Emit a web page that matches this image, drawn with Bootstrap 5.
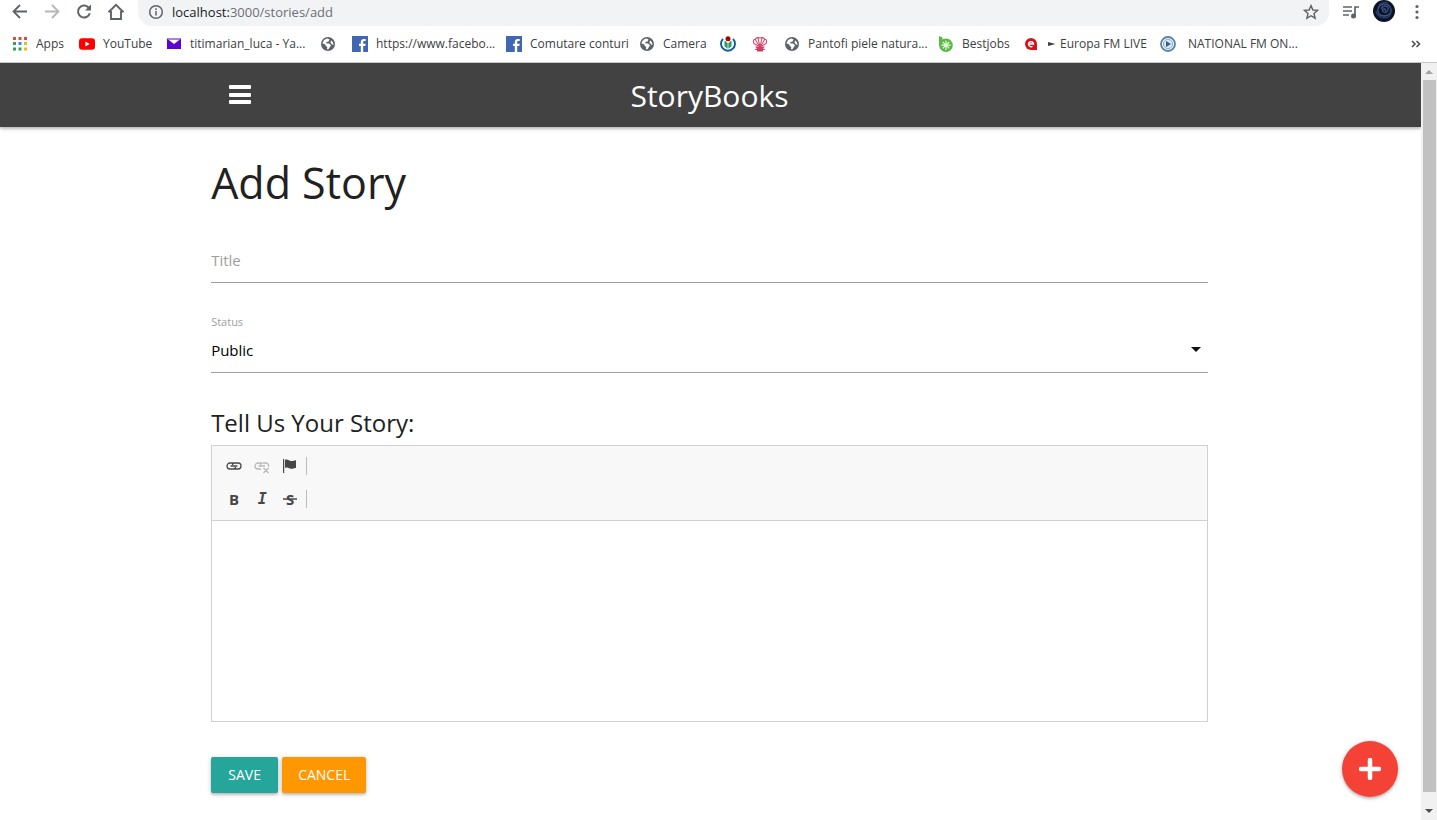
<!DOCTYPE html>
<html lang="en">
<head>
<meta charset="utf-8">
<meta name="viewport" content="width=device-width, initial-scale=1">
<title>StoryBooks</title>
<link href="https://cdn.jsdelivr.net/npm/bootstrap@5.3.0/dist/css/bootstrap.min.css" rel="stylesheet">
<style>
body{font-family:"Open Sans","Noto Sans",sans-serif;font-size:15px;color:#212121;background:#fff}
svg{display:block;flex:none}
button{border:0;background:none;padding:0}
.address-row{height:26px;padding:0 12px;color:#5f6368}
.address-row button{width:16px;height:24px;color:inherit;display:flex;align-items:center;justify-content:center}
.omnibox{background:#f1f3f4;border-radius:0 0 14px 14px;height:26px;margin-left:-2px;padding:0 10px}
.url-text{font-size:13px;line-height:24px;color:#6c7075}
.url-text b{font-weight:400;color:#202124}
.browser-tools{gap:14px;margin-left:-2px}
.avatar{width:22px;height:22px}
.bookmarks{display:grid;grid-template-columns:67px 87px 154px 32px 154px 133px 81px 32px 32px 154px 85px 137px minmax(0,1fr) 14px;height:37px;padding:0 12px;border-bottom:1px solid #c8c8c8;align-items:center;font-size:12px;line-height:16px}
.bookmarks a{color:#3c4043;text-decoration:none;display:flex;align-items:center;gap:8px;white-space:nowrap;height:16px}
.bookmarks .wide-gap{gap:12px}
.site-nav{height:64px;background:#424242;box-shadow:0 2px 2px rgba(0,0,0,.14),0 1px 5px rgba(0,0,0,.2)}
.page-col{width:calc(70% + 2px);margin-left:calc(15% - 2px)}
.brand{font-size:30px;line-height:66px;height:64px;color:#fff;text-decoration:none}
.menu-btn{width:24px;height:64px;margin-left:17px}
h1{font-size:43px;line-height:48px;margin:32px 0 31px}
h2{font-size:24px;line-height:28px;margin:36px 0 8px}
h1,h2{font-weight:400;color:#212121}
.line-input,.line-select{border:0;border-bottom:1px solid #9e9e9e;border-radius:0;background-color:transparent;padding:0;width:100%;height:45px;display:block;outline:0}
.line-input{font-size:15px}
.line-input::placeholder{color:#9e9e9e;opacity:1}
.line-select{appearance:none;font-size:15px;color:#000;height:44px}
.status-label{font-size:11px;line-height:14px;color:#9e9e9e;margin-top:32px;display:block}
.select-arrow{right:6px;top:14px;pointer-events:none}
.editor{border:1px solid #d1d1d1}
.tools{background:#f8f8f8;border-bottom:1px solid #d1d1d1;height:75px;padding:3px 8px;color:#474747}
.tools button{width:28px;height:33px;display:flex;align-items:center;justify-content:center;color:#474747;font-size:15px;font-weight:700;line-height:16px}
.tools button:disabled{color:#b8b8b8}
.tool-sep{width:1px;height:18px;background:#bcbcbc;margin-left:2px}
.tools .slant{font-family:"DejaVu Sans Mono",monospace;font-style:italic}
.story-text{display:block;width:100%;height:200px;border:0;resize:none;outline:0;padding:16px}
.form-actions{margin-top:35px}
.action{height:36px;min-width:67px;border-radius:2px;padding:0 16px;color:#fff;font-size:14px;line-height:36px;box-shadow:0 2px 2px rgba(0,0,0,.14),0 1px 5px rgba(0,0,0,.2)}
.save{background:#26a69a}.cancel{background:#ff9800}
.fab{width:56px;height:56px;border-radius:50%;background:#f44336;right:23px;bottom:23px;box-shadow:0 2px 2px rgba(0,0,0,.14),0 1px 5px rgba(0,0,0,.2)}
.rail{width:16px;background:#f1f1f1}
.rail button{height:17px;width:16px;display:flex;align-items:center;justify-content:center}
.thumb{width:13px;background:#c1c1c1;margin-bottom:11px}
</style>
</head>
<body class="vh-100 d-flex flex-column overflow-hidden">
<svg width="0" height="0" class="position-absolute" aria-hidden="true">
 <symbol id="globe" viewBox="0 0 16 16"><circle cx="8" cy="8" r="7" fill="#5f6368"/><path d="M2.500 7.500C3 4.500 5 3 7.500 2.600L9.500 3.600 8.500 5.500 6.500 6 6.200 7.300 9 7.600 11 9.300 9.600 11.400 8.200 13.500 7 13.300 7.200 11 5.500 9.600 5 8.300ZM11 4.200 13 6.500 13.500 9 12 8.500 10.500 6.500Z" fill="#fff"/></symbol>
 <symbol id="fb" viewBox="0 0 16 16"><path d="M0 0h16v16H0z" fill="#4267b2"/><path d="M8.800 16V10H7V7.800h1.800V6.200C8.800 4 10 3 11.900 3h1.800v2h-1.200c-1 0-1.300.5-1.300 1.300v1.500h2.500L13.300 10h-2.100v6z" fill="#fff"/></symbol>
</svg>
<header>
 <div class="address-row d-flex align-items-start gap-3">
  <button aria-label="Back"><svg width="16" height="16" viewBox="0 0 16 16" fill="none" stroke="currentColor" stroke-width="1.800"><path d="M15 7.500H2M8 1 1.500 7.500 8 14"/></svg></button>
  <button aria-label="Forward"><svg width="16" height="16" viewBox="0 0 16 16" fill="none" stroke="#b5b7ba" stroke-width="1.800"><path d="M1 7.500h13M8 1l6.500 6.500L8 14"/></svg></button>
  <button aria-label="Reload"><svg width="16" height="16" viewBox="0 0 16 16" fill="none" stroke="currentColor" stroke-width="2"><path d="M13.800 9.200A6 6 0 1 1 12.200 3.200L13.700 4.700"/><path d="M15 .5V6.500H9z" fill="currentColor" stroke="none"/></svg></button>
  <button aria-label="Home"><svg width="18" height="18" viewBox="0 0 18 18" fill="none" stroke="currentColor" stroke-width="1.900"><path d="M1.500 9.200 9 1.800l7.500 7.400M4 8v8h10V8"/></svg></button>
  <div class="omnibox d-flex align-items-start gap-2 flex-grow-1">
   <svg width="16" height="24" viewBox="0 0 16 24" fill="none" stroke="currentColor" stroke-width="1.500"><circle cx="8" cy="12" r="6.300"/><path d="M8 11V15.500M8 8.300v1.700"/></svg>
   <a class="url-text flex-grow-1 text-decoration-none" href="#"><b>localhost:</b>3000/stories/add</a>
   <button aria-label="Bookmark this page"><svg width="16" height="16" viewBox="0 0 16 16" fill="none" stroke="currentColor" stroke-width="1.400"><path d="m8 1.600 1.900 4.400 4.700.4-3.600 3.100 1.100 4.700L8 11.700l-4.100 2.500L5 9.500 1.400 6.400 6.100 6z"/></svg></button>
  </div>
  <div class="browser-tools d-flex align-items-start">
   <button aria-label="Media controls"><svg width="18" height="16" viewBox="0 0 18 16" fill="none" stroke="currentColor" stroke-width="1.700"><path d="M1 3h9M1 7h9M1 11h6M13 12V3h4"/><circle cx="11.500" cy="12" r="2.500" fill="currentColor" stroke="none"/></svg></button>
   <svg class="avatar" viewBox="0 0 22 22"><circle cx="11" cy="11" r="11" fill="#0c1426"/><g fill="none" stroke="#3c558a" stroke-width="1.300"><path d="M5 9c1-5 9-7 12-2s-1 9-6 9-7-4-6-7zM8 9c1-3 6-4 7-1s-2 5-4 4-2-3 0-3 2 1 1 2"/><path d="M3 11c1 5 6 8 11 6M18 12c0 3-2 5-5 6M6 5c3-3 7-3 9-2" stroke="#293f70"/></g></svg>
   <button aria-label="Browser menu"><svg width="4" height="16" viewBox="0 0 4 16" fill="currentColor"><circle cx="2" cy="2.500" r="1.600"/><circle cx="2" cy="8" r="1.600"/><circle cx="2" cy="13.500" r="1.600"/></svg></button>
  </div>
 </div>
 <nav class="bookmarks" aria-label="Bookmarks">
  <a href="#"><svg width="16" height="16" viewBox="0 0 16 16"><path d="M1 1h3v3H1zM6.500 1h3v3h-3zM12 1h3v3h-3z" fill="#dd4b3e"/><path d="M1 6h3v3H1zM1 11.500h3v3H1zM6.500 11.500h3v3h-3z" fill="#34a058"/><path d="M6.500 6h3v3h-3z" fill="#3f83ee"/><path d="M12 6h3v3h-3zM12 11.500h3v3h-3z" fill="#f0b51b"/></svg>Apps</a>
  <a href="#"><svg width="16" height="16" viewBox="0 0 16 16"><rect y="2.300" width="16" height="11.500" rx="3" fill="#f00"/><path d="m6.400 5.500 4.300 2.500-4.300 2.500z" fill="#fff"/></svg>YouTube</a>
  <a href="#"><svg width="16" height="16" viewBox="0 0 16 16"><path d="M1 3h14v10H1z" fill="#5f01d1"/><path d="m1.500 3 6.500 5 6.500-5z" fill="#fff"/><path d="M1 3h14" stroke="#5f01d1"/></svg>titimarian_luca - Ya...</a>
  <a href="#" aria-label="Site"><svg width="16" height="16"><use href="#globe"/></svg></a>
  <a href="#"><svg width="16" height="16"><use href="#fb"/></svg>https://www.facebo...</a>
  <a href="#"><svg width="16" height="16"><use href="#fb"/></svg>Comutare conturi</a>
  <a href="#"><svg width="16" height="16"><use href="#globe"/></svg>Camera</a>
  <a href="#" aria-label="Wikimedia"><svg width="16" height="16" viewBox="0 0 16 16"><path d="M3 2.800A7 7 0 1 0 13 2.800" fill="none" stroke="#0a5e97" stroke-width="1.900"/><path d="M4.800 5v5.200L7.300 12.300V7zM11.200 5v5.200L8.700 12.300V7z" fill="#339966" stroke="#339966" stroke-width=".6"/><circle cx="8" cy="2.800" r="2.500" fill="#b00000"/></svg></a>
  <a href="#" aria-label="Shell"><svg width="16" height="16" viewBox="0 0 16 16" fill="none" stroke="#d84b70" stroke-width="1.100"><path d="M8 11 2 7.500C.5 5 2 3 3.500 3.500 4 1.500 6.500 1 8 2c1.500-1 4-.5 4.500 1.500C14 3 15.500 5 14 7.500zM8 11 3.500 4M8 11 6 2M8 11l2-9M8 11l4.500-7"/><path d="M3 10.500h10l-2 2 3 1.500H2l3-1.500zM5 14h6v1.500H5z" fill="#d43c66" stroke="none"/></svg></a>
  <a href="#"><svg width="16" height="16"><use href="#globe"/></svg>Pantofi piele natura...</a>
  <a href="#"><svg width="16" height="16" viewBox="0 0 16 16"><path d="M1 0l3.500 1.500V10H1z" fill="#59b947"/><circle cx="8" cy="9.200" r="6.800" fill="#59b947"/><path d="M8 4.500v9.400M3.400 9.200h9.400M4.700 6l6.600 6.400M11.300 6l-6.600 6.400" stroke="#e8f7dd" stroke-width="1.200"/></svg>Bestjobs</a>
  <a href="#"><svg width="16" height="16" viewBox="0 0 16 16"><path d="M14 14H8a6 6 0 1 1 6-6z" fill="#d9121a"/><path d="M5.500 8h5A2.500 2.500 0 1 0 9.500 10.200" fill="none" stroke="#fff" stroke-width="1.400"/></svg><span class="d-flex align-items-center gap-1"><svg width="9" height="6" viewBox="0 0 9 6"><path d="M1 1l7.500 2L1 5z" fill="#3c4043"/></svg>Europa FM LIVE</span></a>
  <a href="#" class="wide-gap"><svg width="16" height="16" viewBox="0 0 16 16"><circle cx="8" cy="8" r="7" fill="#fff" stroke="#5681a7" stroke-width="1.800"/><circle cx="8" cy="8" r="4.700" fill="#dbe7f1" stroke="#89aac6"/><path d="m6 5 5 3-5 3z" fill="#2f628f"/></svg>NATIONAL FM ON...</a>
  <button aria-label="More bookmarks"><svg width="12" height="12" viewBox="0 0 12 12" fill="none" stroke="#4c5054" stroke-width="1.600"><path d="m1 3 3 3-3 3M5.500 3l3 3-3 3"/></svg></button>
 </nav>
</header>
<div class="d-flex flex-grow-1 position-relative overflow-hidden">
 <div class="flex-grow-1">
  <nav class="site-nav">
   <div class="page-col d-grid position-relative">
    <a class="brand text-center" href="#">StoryBooks</a>
    <button class="menu-btn position-absolute top-0 start-0" aria-label="Open menu"><svg width="24" height="64" viewBox="0 0 24 64" fill="#fff"><rect x="1" y="22" width="22" height="4" rx="1"/><rect x="1" y="30" width="22" height="4" rx="1"/><rect x="1" y="37" width="22" height="4" rx="1"/></svg></button>
   </div>
  </nav>
  <main class="page-col">
   <h1>Add Story</h1>
   <form>
    <input class="line-input" type="text" placeholder="Title" aria-label="Title">
    <label class="status-label" for="status">Status</label>
    <div class="position-relative">
     <select class="line-select" id="status"><option>Public</option><option>Private</option></select>
     <svg class="select-arrow position-absolute" width="12" height="12" viewBox="0 0 12 12"><path d="M1 4h10L6 9z" fill="#111"/></svg>
    </div>
    <h2><label for="story">Tell Us Your Story:</label></h2>
    <div class="editor">
     <div class="tools">
      <div class="d-flex align-items-center">
       <button type="button" aria-label="Link"><svg width="16" height="16" viewBox="0 0 16 16" fill="none" stroke="currentColor" stroke-width="1.300"><path d="M7.500 5H4a3 3 0 0 0 0 6h3.500a2 2 0 0 0 2-2M8.500 11H12a3 3 0 0 0 0-6H8.500a2 2 0 0 0-2 2M4.500 8h7"/></svg></button>
       <button type="button" aria-label="Unlink" disabled><svg width="16" height="16" viewBox="0 0 16 16" fill="none" stroke="currentColor" stroke-width="1.300"><path d="M7.500 5H4a3 3 0 0 0 0 6h3M9 5h3a3 3 0 0 1 2.500 4M8.500 5a2 2 0 0 0-2 2M4.500 8H11M9.500 10l5 5M14.500 10l-5 5"/></svg></button>
       <button type="button" aria-label="Anchor"><svg width="16" height="16" viewBox="0 0 16 16" fill="currentColor"><path d="M1 1h1.200v14H1zM3 2c3-1.500 4 1 6 1s3-.8 5-.8V10c-2 0-3 .8-5 .8S6 8.500 3 10z"/></svg></button>
       <span class="tool-sep"></span>
      </div>
      <div class="d-flex align-items-center">
       <button type="button" aria-label="Bold">B</button>
       <button type="button" class="slant" aria-label="Italic">I</button>
       <button type="button" aria-label="Strikethrough"><svg width="14" height="2" class="position-absolute"><path d="M0 1h14" stroke="currentColor" stroke-width="1.500"/></svg>S</button>
       <span class="tool-sep"></span>
      </div>
     </div>
     <textarea class="story-text" id="story"></textarea>
    </div>
    <div class="form-actions d-flex gap-1">
     <button class="action save" type="submit">SAVE</button>
     <button class="action cancel" type="button">CANCEL</button>
    </div>
   </form>
  </main>
 </div>
 <div class="rail d-flex flex-column align-items-center">
  <button aria-label="Scroll up"><svg width="8" height="5" viewBox="0 0 8 5"><path d="M0 5l4-4 4 4z" fill="#a3a3a3"/></svg></button>
  <div class="thumb flex-grow-1"></div>
  <button aria-label="Scroll down"><svg width="8" height="5" viewBox="0 0 8 5"><path d="M0 0l4 4 4-4z" fill="#505050"/></svg></button>
 </div>
 <button class="fab position-absolute me-3" aria-label="Add story"><svg class="m-auto" width="22" height="22" viewBox="0 0 22 22"><path d="M11 2v18M2 11h18" stroke="#fff" stroke-width="4.500" stroke-linecap="round"/></svg></button>
</div>
<script src="https://cdn.jsdelivr.net/npm/bootstrap@5.3.0/dist/js/bootstrap.bundle.min.js"></script>
</body>
</html>
